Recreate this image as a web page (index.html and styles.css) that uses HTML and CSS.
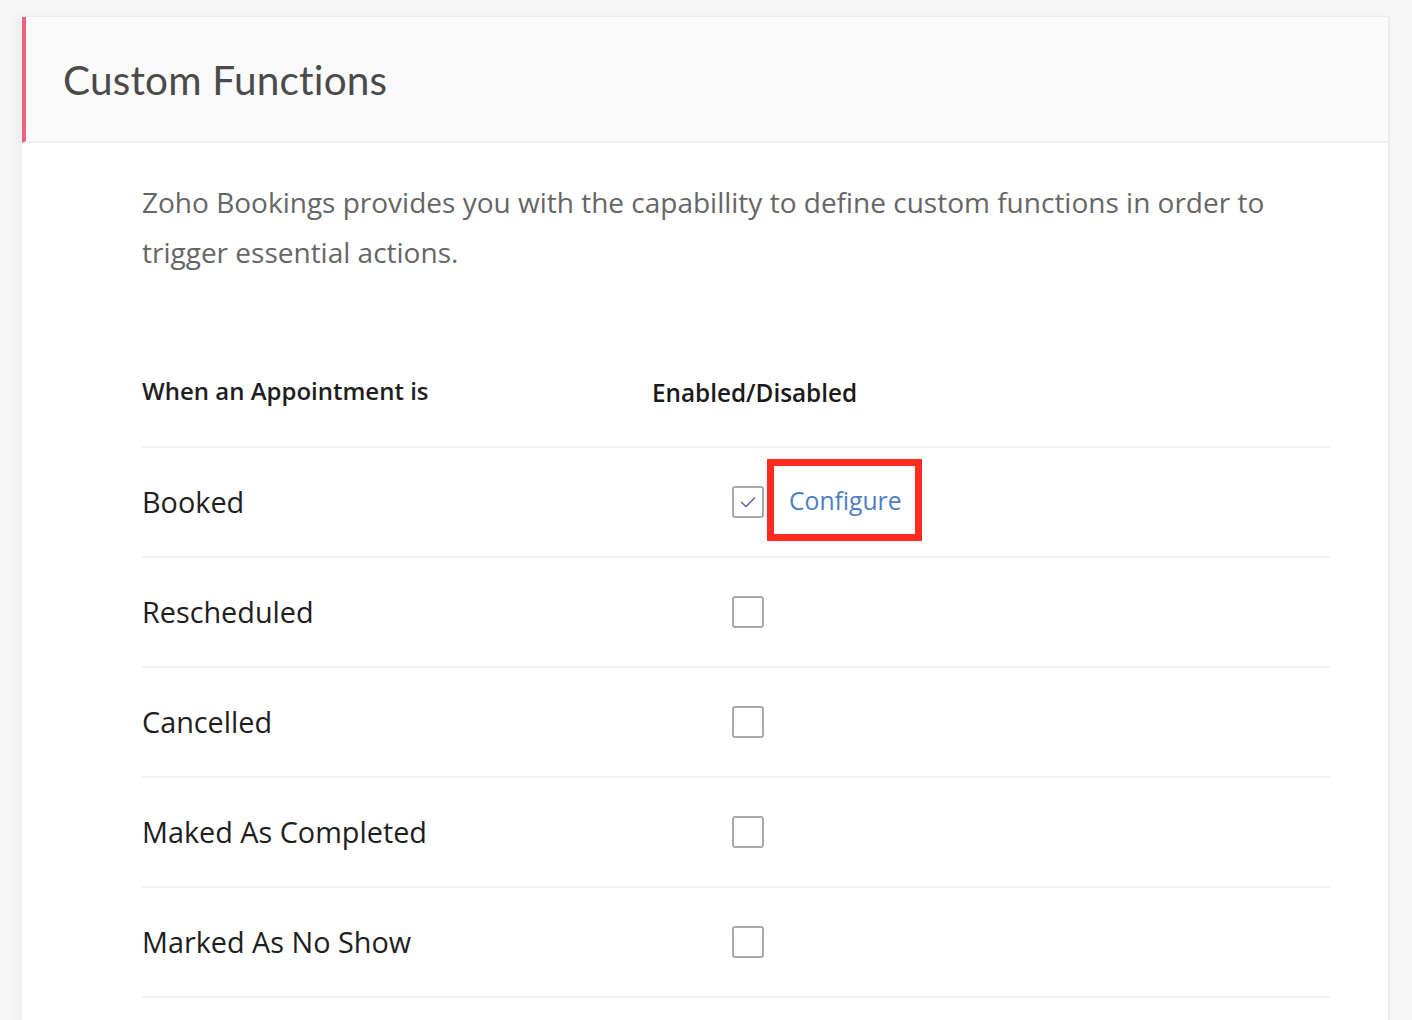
FILE: index.html
```html
<!DOCTYPE html>
<html>
<head>
<meta charset="utf-8">
<link rel="stylesheet" href="styles.css">
</head>
<body>
<div class="card">
  <div class="card-header">
    <h1 class="title">Custom Functions</h1>
  </div>
  <div class="card-body">
    <p class="desc">Zoho Bookings provides you with the capabillity to define custom functions in order to trigger essential actions.</p>
    <div class="table">
      <div class="row head">
        <div class="col-label">When an Appointment is</div>
        <div class="col-status head-status">Enabled/Disabled</div>
      </div>
      <div class="row">
        <div class="col-label">Booked</div>
        <div class="col-status">
          <span class="checkbox checked">
            <svg width="18" height="18" viewBox="0 0 18 18"><path d="M2.5 9.5 L7 13.5 L15.5 5" fill="none" stroke="#6a5a9c" stroke-width="1.5" stroke-linecap="round" stroke-linejoin="round"/></svg>
          </span>
          <span class="configure-box"><a class="configure">Configure</a></span>
        </div>
      </div>
      <div class="row">
        <div class="col-label">Rescheduled</div>
        <div class="col-status"><span class="checkbox"></span></div>
      </div>
      <div class="row">
        <div class="col-label">Cancelled</div>
        <div class="col-status"><span class="checkbox"></span></div>
      </div>
      <div class="row">
        <div class="col-label">Maked As Completed</div>
        <div class="col-status"><span class="checkbox"></span></div>
      </div>
      <div class="row">
        <div class="col-label">Marked As No Show</div>
        <div class="col-status"><span class="checkbox"></span></div>
      </div>
    </div>
  </div>
</div>
</body>
</html>
```
FILE: styles.css
```css
html, body {
  margin: 0;
  padding: 0;
}
body {
  background: #f6f6f6;
  font-family: "Open Sans", Lato, sans-serif;
  padding: 16px 22px 0 22px;
  height: 1020px;
  box-sizing: border-box;
  overflow: hidden;
}
.card {
  background: #fff;
  border-top: 1px solid #ececec;
  border-right: 2px solid #ececec;
  box-shadow: -6px 0 10px rgba(0,0,0,0.03);
  height: 1100px;
}
.card-header {
  background: #fafafa;
  border-left: 4px solid #f0627b;
  border-bottom: 2px solid #efefef;
  height: 124px;
  display: flex;
  align-items: center;
  padding-left: 37px;
}
.title {
  margin: 0;
  font-family: Lato, "Open Sans", sans-serif;
  font-weight: 400;
  font-size: 40.5px;
  color: #4a4a4a;
  letter-spacing: 0.2px;
}
.card-body {
  padding: 34px 58px 0 120px;
}
.desc {
  margin: 0;
  font-size: 28px;
  line-height: 50px;
  color: #666;
  max-width: 1150px;
}
.table {
  margin-top: 61px;
}
.row {
  display: flex;
  align-items: center;
  height: 108px;
  border-bottom: 2px solid #f2f2f2;
}
.row.head {
  font-weight: 600;
  color: #1a1a1a;
}
.col-label {
  width: 510px;
  font-size: 28.8px;
  color: #1e1e1e;
  margin-top: -2px;
}
.row.head .col-label {
  font-size: 24px;
  margin-top: -4px;
}
.col-status {
  display: flex;
  align-items: center;
  padding-left: 80px;
}
.head-status {
  padding-left: 0;
  font-size: 24.3px;
}
.checkbox {
  width: 28px;
  height: 28px;
  border: 2px solid #a9a9a9;
  border-radius: 3px;
  display: inline-flex;
  align-items: center;
  justify-content: center;
}
.configure-box {
  margin-left: 3px;
  margin-top: -4px;
  border: 7px solid #ff2b20;
  height: 68px;
  display: inline-flex;
  align-items: center;
  padding: 0 13px 0 15px;
}
.configure {
  color: #4f7ec4;
  font-size: 24.7px;
  cursor: pointer;
}
```
